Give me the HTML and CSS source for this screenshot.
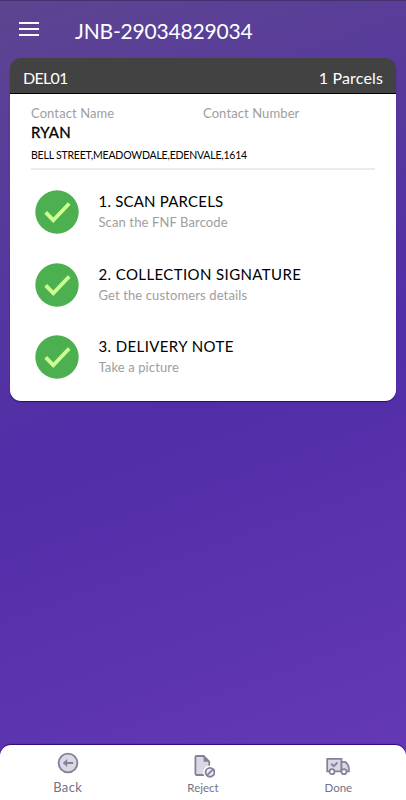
FILE: index.html
```html
<!DOCTYPE html>
<html lang="en">
<head>
    <meta charset="UTF-8">
    <meta name="viewport" content="width=device-width, initial-scale=1.0">
    <title>JNB-29034829034</title>
    <link rel="stylesheet" href="styles.css">
</head>
<body>
    <header class="topbar">
        <svg class="menu-icon" viewBox="0 0 20 14">
            <path d="M0 1h20M0 7h20M0 13h20" stroke="#fff" stroke-width="2"/>
        </svg>
        <h1>JNB-29034829034</h1>
    </header>

    <main class="card">
        <div class="card-header">
            <span class="code">DEL01</span>
            <span class="parcels">1 Parcels</span>
        </div>
        <div class="card-body">
            <div class="contact">
                <span>Contact Name</span>
                <span>Contact Number</span>
            </div>
            <div class="name">RYAN</div>
            <div class="address">BELL STREET,MEADOWDALE,EDENVALE,1614</div>

            <div class="step">
                <svg class="check" viewBox="0 0 44 44">
                    <circle cx="22" cy="22" r="21.7" fill="#4caf50"/>
                    <path d="M10.7 22.4l7.6 7.8L34.2 13.5" fill="none" stroke="#ccff90" stroke-width="3.8"/>
                </svg>
                <div class="step-text">
                    <h2 class="scan">1. SCAN PARCELS</h2>
                    <p>Scan the FNF Barcode</p>
                </div>
            </div>
            <div class="step">
                <svg class="check" viewBox="0 0 44 44">
                    <circle cx="22" cy="22" r="21.7" fill="#4caf50"/>
                    <path d="M10.7 22.4l7.6 7.8L34.2 13.5" fill="none" stroke="#ccff90" stroke-width="3.8"/>
                </svg>
                <div class="step-text">
                    <h2>2. COLLECTION SIGNATURE</h2>
                    <p>Get the customers details</p>
                </div>
            </div>
            <div class="step">
                <svg class="check" viewBox="0 0 44 44">
                    <circle cx="22" cy="22" r="21.7" fill="#4caf50"/>
                    <path d="M10.7 22.4l7.6 7.8L34.2 13.5" fill="none" stroke="#ccff90" stroke-width="3.8"/>
                </svg>
                <div class="step-text">
                    <h2>3. DELIVERY NOTE</h2>
                    <p>Take a picture</p>
                </div>
            </div>
        </div>
    </main>

    <nav class="bottombar">
        <a class="tab back">
            <svg width="24" height="24" viewBox="0 0 24 24">
                <circle cx="12" cy="12" r="9.4" fill="#dad8e4" stroke="#858199" stroke-width="1.9"/>
                <path d="M17.2 12H10" stroke="#858199" stroke-width="2"/>
                <path d="M6.8 12l4.4-3.9v7.8z" fill="#858199"/>
            </svg>
            <span>Back</span>
        </a>
        <a class="tab reject">
            <svg width="24" height="24" viewBox="0 0 24 24">
                <path d="M5.6 2h7l5.6 5.6V21H5.6a1.2 1.2 0 0 1-1.2-1.2V3.2A1.2 1.2 0 0 1 5.6 2z" fill="#dad8e4" stroke="#858199" stroke-width="1.8"/>
                <path d="M12.6 1.2l6.4 6.6h-6.4z" fill="#858199"/>
                <circle cx="19" cy="18.3" r="6.8" fill="#fff"/>
                <circle cx="19" cy="18.3" r="4.4" fill="#eeedf3" stroke="#858199" stroke-width="1.9"/>
                <path d="M16 21.3l6-6" stroke="#858199" stroke-width="1.9"/>
            </svg>
            <span>Reject</span>
        </a>
        <a class="tab done">
            <svg width="24" height="24" viewBox="0 0 24 24">
                <path d="M1.2 4.8h14.3v12.6H1.2z" fill="#dad8e4" stroke="#858199" stroke-width="1.7"/>
                <path d="M15.5 7.8h3.4q3.6 2.4 4 6.2v3.4h-7.4z" fill="#dad8e4" stroke="#858199" stroke-width="1.7"/>
                <path d="M5.2 9.8l2.5 2.4 3.8-3.7" fill="none" stroke="#858199" stroke-width="1.9"/>
                <circle cx="6" cy="17.7" r="2.5" fill="#fff" stroke="#858199" stroke-width="1.7"/>
                <circle cx="18" cy="17.7" r="2.5" fill="#fff" stroke="#858199" stroke-width="1.7"/>
            </svg>
            <span>Done</span>
        </a>
    </nav>
</body>
</html>
```
FILE: styles.css
```css
* {
    box-sizing: border-box;
}
body {
    margin: 0;
    height: 100vh;
    display: flex;
    flex-direction: column;
    overflow: hidden;
    font-family: Lato, "Open Sans", sans-serif;
    background: linear-gradient(160deg, #5d4591 0%, #512da8 50%, #673ab7 100%);
    border-top: 1px solid #443370;
}
h1, h2, p {
    margin: 0;
    font-weight: 400;
}
.topbar {
    display: flex;
    height: 57px;
    padding: 21px 19px 0;
    gap: 36px;
    color: #fff;
}
.menu-icon {
    width: 20px;
    height: 14px;
}
h1 {
    font-size: 21px;
    line-height: 26px;
    margin-top: -4px;
    letter-spacing: -0.18px;
}
.card {
    display: flex;
    flex-direction: column;
    height: 342.5px;
    margin: 0 10.4px;
    border-radius: 11px;
    box-shadow: 0 1px 1px #28106d;
}
.card-header {
    display: flex;
    justify-content: space-between;
    height: 36px;
    padding: 0 12.6px;
    line-height: 39px;
    font-size: 16px;
    color: #fff;
    background: #424242;
    border-bottom: 1px solid #000;
    border-radius: 11px 11px 0 0;
}
.code {
    letter-spacing: -0.7px;
}
.parcels {
    letter-spacing: 0.15px;
}
.card-body {
    flex: 1;
    padding: 10px 20.6px 0;
    background: #fff;
    border-radius: 0 0 11px 11px;
}
.contact {
    display: grid;
    grid-template-columns: 1fr 1fr;
    font-size: 13px;
    line-height: 18px;
    letter-spacing: 0.1px;
    color: #9e9e9e;
}
.name {
    font-size: 15px;
    line-height: 20px;
    letter-spacing: 0.25px;
    color: #000;
    -webkit-text-stroke: 0.3px #000;
}
.address {
    height: 28px;
    font-size: 10.5px;
    line-height: 27px;
    letter-spacing: -0.2px;
    border-bottom: 2px solid #ebebeb;
}
.step {
    display: flex;
    height: 72.5px;
    padding: 20px 0 0 4px;
    gap: 19.5px;
}
.check {
    width: 44px;
    height: 44px;
}
.step-text h2 {
    font-size: 15px;
    line-height: 22px;
    letter-spacing: 0.39px;
}
.step-text .scan {
    letter-spacing: 0.2px;
}
.step-text p {
    font-size: 13px;
    line-height: 21px;
    letter-spacing: 0.12px;
    color: #9e9e9e;
}
.bottombar {
    display: grid;
    grid-template-columns: repeat(3, 1fr);
    height: 55px;
    margin-top: auto;
    background: #fff;
    border-radius: 11px 11px 0 0;
    box-shadow: 0 -1px 1px #280b7b;
}
.tab {
    display: flex;
    flex-direction: column;
    align-items: center;
    padding-top: 6px;
    color: #75727f;
    font-size: 11.5px;
}
.tab span {
    line-height: 16px;
    margin-top: 4px;
}
.back {
    font-size: 13px;
    letter-spacing: 0.3px;
}
.tab.reject, .tab.done {
    padding-top: 9px;
}
.reject span, .done span {
    margin-top: 2px;
}
```
